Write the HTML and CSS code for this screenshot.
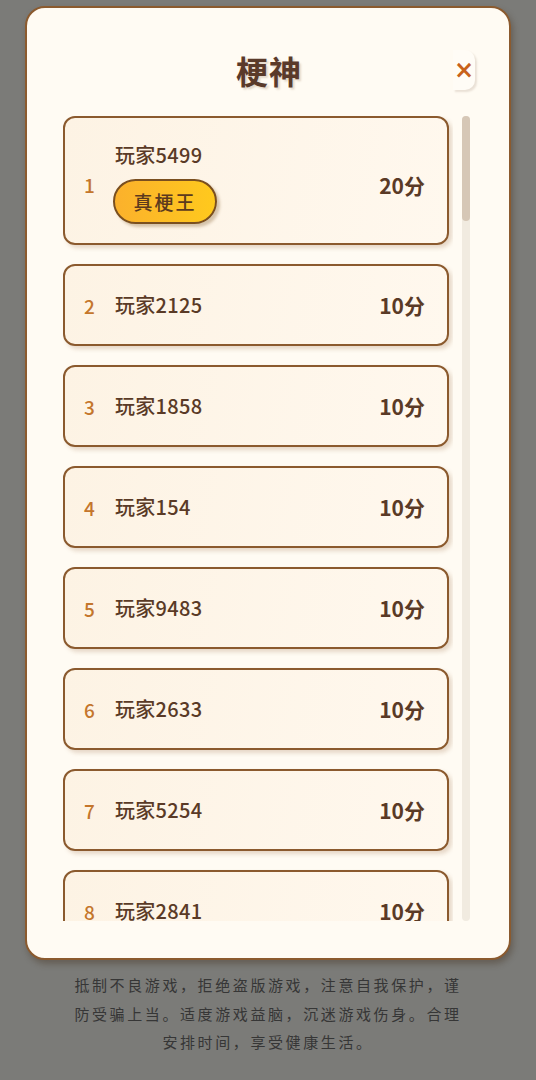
FILE: index.html
```html
<!DOCTYPE html>
<html lang="zh-CN">
<head>
  <meta charset="UTF-8">
  <meta name="viewport" content="width=device-width, initial-scale=1.0">
  <title>梗神</title>
  <link rel="stylesheet" href="styles.css">
</head>
<body>
  <div class="modal">
    <div class="modal-header">
      <span></span>
      <h1 class="title">梗神</h1>
      <button class="close-btn">×</button>
    </div>
    <div class="modal-body">
      <div class="rank-list">
        <div class="rank-item top">
          <span class="rank-no">1</span>
          <div class="player">
            <span class="name">玩家5499</span>
            <span class="badge">真梗王</span>
          </div>
          <span class="score">20分</span>
        </div>
        <div class="rank-item">
          <span class="rank-no">2</span>
          <div class="player"><span class="name">玩家2125</span></div>
          <span class="score">10分</span>
        </div>
        <div class="rank-item">
          <span class="rank-no">3</span>
          <div class="player"><span class="name">玩家1858</span></div>
          <span class="score">10分</span>
        </div>
        <div class="rank-item">
          <span class="rank-no">4</span>
          <div class="player"><span class="name">玩家154</span></div>
          <span class="score">10分</span>
        </div>
        <div class="rank-item">
          <span class="rank-no">5</span>
          <div class="player"><span class="name">玩家9483</span></div>
          <span class="score">10分</span>
        </div>
        <div class="rank-item">
          <span class="rank-no">6</span>
          <div class="player"><span class="name">玩家2633</span></div>
          <span class="score">10分</span>
        </div>
        <div class="rank-item">
          <span class="rank-no">7</span>
          <div class="player"><span class="name">玩家5254</span></div>
          <span class="score">10分</span>
        </div>
        <div class="rank-item">
          <span class="rank-no">8</span>
          <div class="player"><span class="name">玩家2841</span></div>
          <span class="score">10分</span>
        </div>
        <div class="rank-item">
          <span class="rank-no">9</span>
          <div class="player"><span class="name">玩家3307</span></div>
          <span class="score">10分</span>
        </div>
      </div>
      <div class="scrollbar">
        <div class="thumb"></div>
      </div>
    </div>
  </div>

  <p class="notice">抵制不良游戏，拒绝盗版游戏，注意自我保护，谨防受骗上当。适度游戏益脑，沉迷游戏伤身。合理安排时间，享受健康生活。</p>
</body>
</html>
```

FILE: styles.css
```css
body {
  margin: 0;
  padding: 6px 0 0;
  background: #7b7b78;
  font-family: "Noto Sans CJK SC", "Noto Sans", sans-serif;
  color: #5a3a26;
}

.modal {
  box-sizing: border-box;
  width: 486px;
  height: 954px;
  margin-left: 25px;
  background: #fffbf3;
  border: 2px solid #8b5a2e;
  border-radius: 20px;
  box-shadow: 2px 4px 6px rgba(60, 40, 20, 0.35);
  display: flex;
  flex-direction: column;
}

.modal-header {
  display: grid;
  grid-template-columns: 1fr auto 1fr;
  align-items: center;
  padding: 42px 34px 26px 36px;
}
.title {
  margin: 0;
  font-size: 32px;
  line-height: 40px;
  font-weight: 700;
  color: #5a3a2a;
  letter-spacing: 1px;
  text-shadow: 2px 2px 2px rgba(120, 80, 40, 0.2);
}
.close-btn {
  justify-self: end;
  width: 22px;
  height: 40px;
  padding: 0;
  border: none;
  border-radius: 0 10px 10px 0;
  background: #fffcf6;
  box-shadow: 2px 2px 2px rgba(120, 90, 60, 0.16);
  color: #c8621a;
  font-family: "DejaVu Sans", sans-serif;
  font-size: 24px;
  font-weight: 700;
  line-height: 40px;
  text-align: center;
  cursor: pointer;
}

.modal-body {
  display: flex;
  padding: 0 39px 0 36px;
}
.rank-list {
  width: 390px;
  height: 805px;
  overflow: hidden;
  display: flex;
  flex-direction: column;
  gap: 19px;
}
.rank-item {
  box-sizing: border-box;
  flex-shrink: 0;
  width: 386px;
  min-height: 82px;
  display: flex;
  align-items: center;
  padding: 0 22px 0 17px;
  background: linear-gradient(100deg, #fdf3e4, #fff8ee);
  border: 2px solid #8b5a2e;
  border-radius: 12px;
  box-shadow: 3px 3px 4px rgba(139, 90, 46, 0.22);
}
.rank-item.top {
  height: 129px;
  padding-top: 8px;
}
.rank-no {
  width: 31px;
  padding-left: 2px;
  font-size: 19px;
  font-weight: 500;
  color: #c4762c;
}
.player {
  flex: 1;
  display: flex;
  flex-direction: column;
  align-items: flex-start;
  gap: 11px;
}
.top .player {
  margin-top: -4px;
}
.name {
  font-size: 20px;
  line-height: 26px;
  font-weight: 500;
  letter-spacing: 0.3px;
  color: #5a3a26;
}
.badge {
  box-sizing: border-box;
  width: 104px;
  height: 45px;
  margin-left: -2px;
  display: flex;
  align-items: center;
  justify-content: center;
  border: 2px solid #7a4f1f;
  border-radius: 23px;
  background: linear-gradient(90deg, #fbb12c, #ffc91d);
  box-shadow: 3px 3px 3px rgba(120, 80, 30, 0.3);
  font-size: 19px;
  font-weight: 500;
  letter-spacing: 2px;
  color: #5c3a1e;
}
.score {
  font-size: 21px;
  font-weight: 600;
  color: #5a3a26;
}

.scrollbar {
  width: 8px;
  height: 805px;
  margin-left: 9px;
  border-radius: 4px;
  background: #f1ebe0;
}
.thumb {
  height: 105px;
  border-radius: 4px;
  background: #d6c7b6;
}

.notice {
  width: 392px;
  margin: 11px auto 0;
  font-size: 15px;
  line-height: 28.5px;
  letter-spacing: 2.6px;
  text-align: center;
  color: #363636;
}
```
